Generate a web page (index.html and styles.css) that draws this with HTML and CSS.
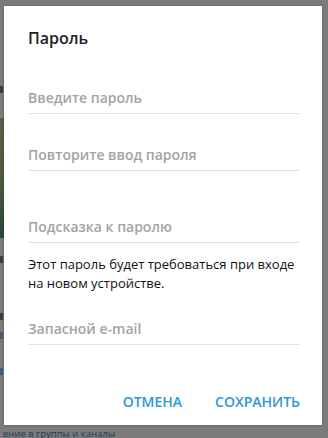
FILE: index.html
```html
<!DOCTYPE html>
<html lang="ru">
<head>
<meta charset="utf-8">
<title>Пароль</title>
<link rel="stylesheet" href="styles.css">
</head>
<body>
<div class="screen">
  <div class="side">
    <span class="mark dark m1"></span>
    <span class="green"></span>
    <span class="mark dark m2"></span>
    <span class="mark dark m3"></span>
    <span class="mark blue m4"></span>
    <span class="mark blue m5"></span>
  </div>
  <div class="dialog">
    <div class="title">Пароль</div>
    <div class="field">Введите пароль</div>
    <div class="field">Повторите ввод пароля</div>
    <div class="field spaced">Подсказка к паролю</div>
    <p class="desc">Этот пароль будет требоваться при входе на новом устройстве.</p>
    <div class="field email">Запасной e-mail</div>
    <div class="footer">
      <span class="btn">Отмена</span>
      <span class="btn">Сохранить</span>
    </div>
  </div>
</div>
<div class="under">ение в группы и каналы</div>
</body>
</html>
```
FILE: styles.css
```css
html, body {
  margin: 0;
  padding: 0;
}
body {
  width: 328px;
  height: 438px;
  overflow: hidden;
  background: #7b7b7b;
  font-family: "Open Sans", "Noto Sans", sans-serif;
}
.screen {
  display: flex;
  height: 425px;
}
.side {
  width: 4px;
  display: flex;
  flex-direction: column;
}
.mark {
  display: block;
  width: 3px;
  height: 7px;
}
.mark.dark { background: #3c3c3c; }
.mark.blue { background: #3d5f7c; }
.m1 { margin-top: 86px; }
.green {
  display: block;
  width: 4px;
  height: 120px;
  margin-top: 25px;
  background: linear-gradient(#5e6048, #4c5a44 50%, #2d4534);
}
.m2 { margin-top: 18px; }
.m3 { margin-top: 50px; }
.m4 { margin-top: 12px; }
.m5 { margin-top: 29px; }
.dialog {
  margin-top: 6px;
  width: 318px;
  height: 419px;
  box-sizing: border-box;
  background: #fff;
  box-shadow: 0 0 2px rgba(0, 0, 0, 0.35);
  padding: 21px 22px 0 24px;
  display: flex;
  flex-direction: column;
}
.title {
  font-size: 16px;
  font-weight: 600;
  line-height: 22px;
  color: #222;
  margin-bottom: 8px;
}
.field {
  font-size: 14px;
  font-weight: 600;
  line-height: 20px;
  color: #a3a3a3;
  padding: 31px 0 5px;
  border-bottom: 1px solid #e0e0e0;
}
.field.spaced {
  margin-top: 15px;
}
.desc {
  margin: 12px 0 0;
  font-size: 13px;
  line-height: 19px;
  color: #111;
}
.field.email {
  padding-top: 26px;
}
.footer {
  margin-top: 47px;
  display: flex;
  justify-content: flex-end;
  gap: 33px;
}
.btn {
  font-size: 14px;
  line-height: 20px;
  font-weight: 600;
  text-transform: uppercase;
  color: #2d96d8;
}
.under {
  padding-left: 3px;
  padding-top: 3px;
  font-size: 9.5px;
  line-height: 12px;
  color: #173f5e;
  white-space: nowrap;
}
```
